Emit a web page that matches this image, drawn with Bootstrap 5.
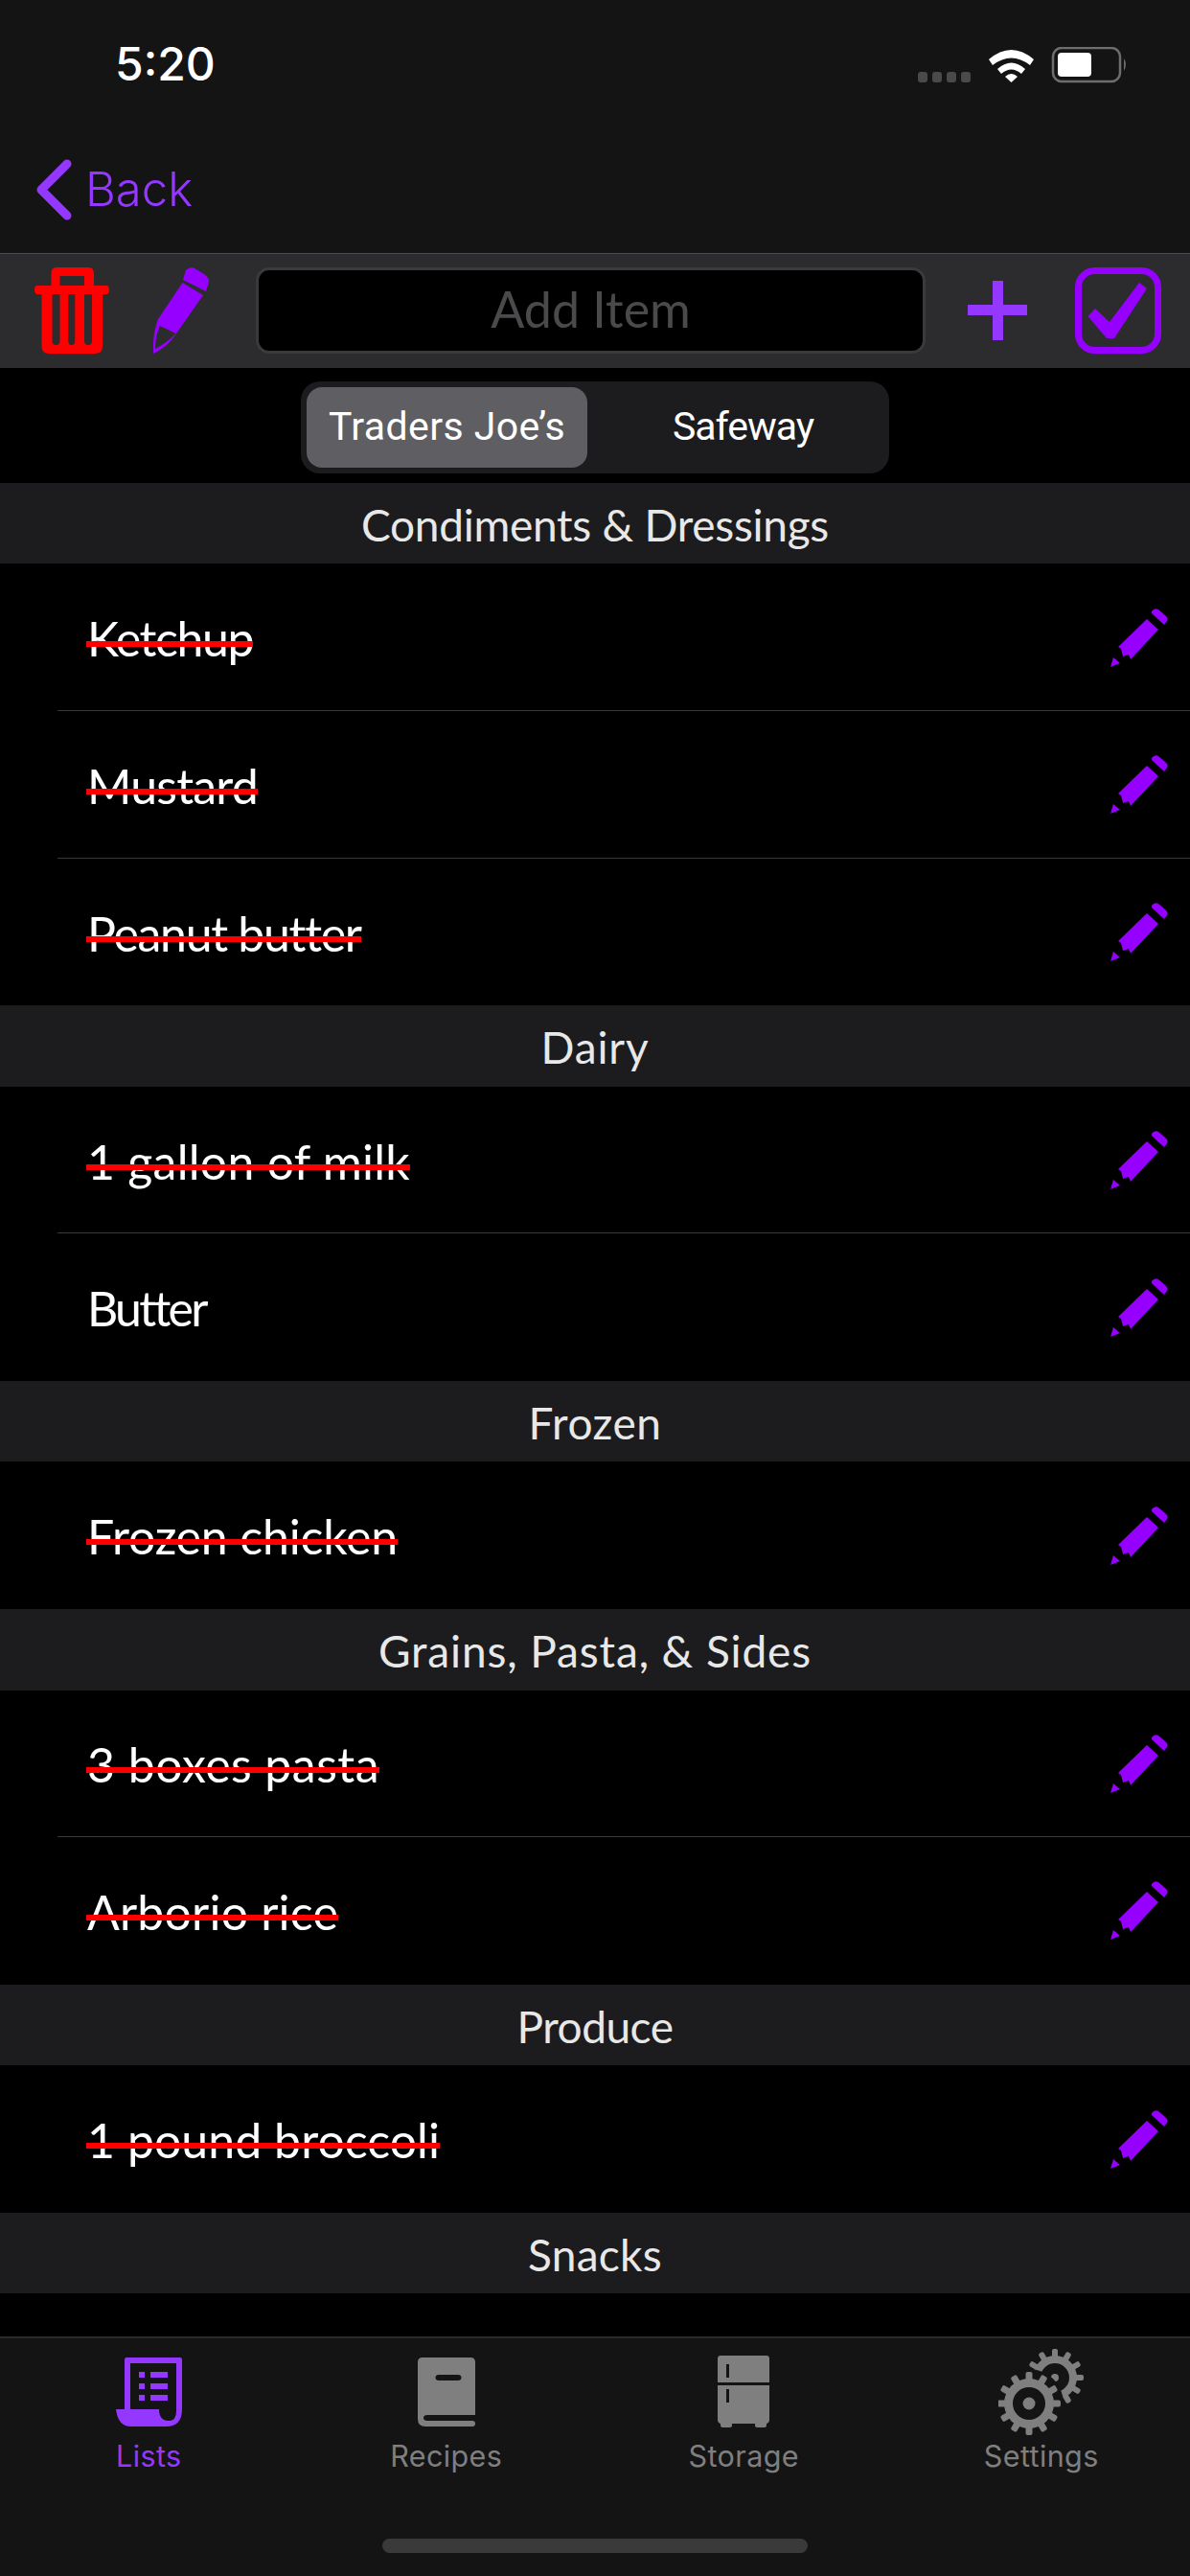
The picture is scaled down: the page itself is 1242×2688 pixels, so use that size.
<!DOCTYPE html>
<html lang="en">
<head>
    <meta charset="UTF-8">
    <meta name="viewport" content="width=device-width, initial-scale=1.0">
    <title>Lists</title>
    <link href="https://cdn.jsdelivr.net/npm/bootstrap@5.3.3/dist/css/bootstrap.min.css" rel="stylesheet">
    <style>
        html, body { height: 2688px; background: #000; }
        body { width: 1242px; overflow: hidden; font-family: "Lato", "Liberation Sans", sans-serif; color: #fff; }
        .top-area { background: #141414; height: 264px; }
        .status-row { height: 132px; padding: 0 65px 0 120px; }
        .status-icons { margin-top: 4px; }
        .clock { font-family: "Inter", "Liberation Sans", sans-serif; font-size: 48px; font-weight: 500; line-height: 1; margin-top: 2px; }
        .back-row { height: 132px; padding: 0 0 0 38px; color: #9437ff; font-family: "Inter", "Roboto", sans-serif; font-size: 49px; font-weight: 300; gap: 14px; }
        .tool-row { background: #2c2c2e; border-top: 1px solid #4c4c4e; height: 120px; padding: 14px 30px 15px 36px; }
        .pencil-big { margin-left: 46px; }
        .add-box { width: 699px; height: 90px; margin-left: 48px; background: #000; border: 3px solid #3a3a3c; border-radius: 14px; color: #4a4a4c; font-size: 52px; line-height: 80px; text-align: center; }
        .plus-btn { margin-left: 44px; margin-top: 14px; }
        .check-btn { margin-left: 50px; }
        .seg-row { height: 120px; background: #000; padding-top: 14px; }
        .seg-box { width: 614px; height: 96px; margin-left: 314px; background: #1c1c1e; border-radius: 20px; padding: 6px; }
        .seg-on, .seg-off { height: 84px; font-family: "Roboto", sans-serif; font-size: 41px; }
        .seg-on { width: 293px; background: #5f5f63; border-radius: 16px; }
        .seg-off { width: 309px; padding-left: 16px; }
        .sec-head { background: #1c1c1e; height: 84.4px; color: #e8e8e8; font-size: 46px; line-height: 87px; text-align: center; }
        .sec-head span { display: inline-block; white-space: nowrap; }
        .item-row { height: 153.67px; padding: 0 23px 0 60px; position: relative; font-size: 50px; background: #000; }
        .item-row + .item-row::before { content: ""; position: absolute; top: -1px; left: 60px; right: 0; height: 1px; background: #38383a; }
        .item-name { position: relative; display: inline-block; line-height: 1.2; margin-left: 31px; white-space: nowrap; top: 1px; }
        .item-name.crossed::after { content: ""; position: absolute; left: -1px; right: 0; top: 50%; height: 6px; margin-top: 3px; background: #f00; }
        .list-wrap { flex: 1 1 auto; overflow: hidden; background: #000; }
        .tab-bar { background: #141414; border-top: 2px solid #2a2a2a; height: 250px; padding-top: 10px; }
        .tab-col { width: 310.5px; text-align: center; color: #7f7f7f; font-family: "Inter", sans-serif; font-size: 30.5px; line-height: 1; }
        .tab-col.is-on { color: #9437ff; }
        .tab-icon { height: 92px; margin-bottom: 6px; }
        .tab-label { letter-spacing: .4px; }
        .home-bar { width: 444px; height: 15px; background: #3a3a3a; border-radius: 8px; position: absolute; left: 399px; bottom: 24px; }
    </style>
</head>
<body class="d-flex flex-column">
    <div class="top-area flex-shrink-0">
        <div class="status-row d-flex justify-content-between align-items-center">
            <div class="clock">5:20</div>
            <svg class="status-icons" width="219" height="38" viewBox="0 0 219 38">
                <g fill="#4a4a4a"><rect x="0" y="26" width="10" height="11" rx="3"/><rect x="15" y="26" width="10" height="11" rx="3"/><rect x="30" y="26" width="10" height="11" rx="3"/><rect x="45" y="26" width="10" height="11" rx="3"/></g>
                <g fill="#fff"><path d="M74 13 Q97.500 -7 121 13 L117 19 Q97.500 4 78 19Z"/><path d="M83 23 Q97.500 10 112 23 L108 28 Q97.500 19 87 28Z"/><path d="M91 31 Q97.500 25 104 31 L97.500 37Z"/></g>
                <rect x="141" y="1" width="70" height="35" rx="9" fill="none" stroke="#6e6e6e" stroke-width="2.500"/>
                <rect x="146" y="6" width="35" height="25" rx="4" fill="#fff"/>
                <path d="M215 12 Q219 18 215 25Z" fill="#6e6e6e"/>
            </svg>
        </div>
        <div class="back-row d-flex align-items-center">
            <svg width="37" height="64" viewBox="0 0 37 64"><path d="M32 5 L5 32 L32 59" fill="none" stroke="#9437ff" stroke-width="9" stroke-linecap="round" stroke-linejoin="round"/></svg>
            <span>Back</span>
        </div>
    </div>
    <div class="tool-row d-flex align-items-start flex-shrink-0">
        <svg width="78" height="90" viewBox="0 0 78 90">
            <path fill="#f00" fill-rule="evenodd" d="M23 0 H56 Q62 0 62 6 V19 H75 Q78 19 78 23.500 Q78 28 75 28 H71 V82 Q71 90 63 90 H15 Q7.500 90 7.500 82 V28 H3 Q0 28 0 23.500 Q0 19 3 19 H17.500 V6 Q17.500 0 23 0Z M26.500 9 V19 H52 V9Z M18.500 28 V77 Q18.500 81 22.500 81 Q26.500 81 26.500 77 V28Z M35.300 28 V77 Q35.300 81 38.800 81 Q42.300 81 42.300 77 V28Z M52 28 V77 Q52 81 56 81 Q60 81 60 77 V28Z"/>
        </svg>
        <svg class="pencil-big" width="59" height="90" viewBox="0 0 59 90">
            <path fill="#9600ff" d="M34 3 Q38 -1 43 1 L53 7 Q58 10 58 15 L55 25 L31 13Z"/>
            <path fill="#9600ff" fill-rule="evenodd" d="M30.500 16 L52 29 L24 69 Q15 83 0 90 Q-1 70 5 54Z M7 61 Q2 72 2 85 Q14 79 23.500 69Z"/>
        </svg>
        <div class="add-box">Add Item</div>
        <svg class="plus-btn" width="62" height="62" viewBox="0 0 62 62"><path fill="#9437ff" d="M26 0 H37 V25 H62 V36 H37 V62 H26 V36 H0 V25 H26Z"/></svg>
        <svg class="check-btn" width="90" height="90" viewBox="0 0 90 90">
            <rect x="3.500" y="3.500" width="83" height="83" rx="17" fill="none" stroke="#9600ff" stroke-width="7"/>
            <path fill="#9600ff" d="M13.500 51 L21 43 L36 57 L67 16 L75 22 L41 74 L33 74Z"/>
        </svg>
    </div>
    <div class="list-wrap d-flex flex-column">
        <div class="seg-row flex-shrink-0">
            <div class="seg-box d-flex">
                <div class="seg-on d-flex align-items-center justify-content-center"><span data-w="247">Traders Joe’s</span></div>
                <div class="seg-off d-flex align-items-center justify-content-center"><span data-w="147">Safeway</span></div>
            </div>
        </div>
        <div id="groups"></div>
    </div>
    <div class="tab-bar d-flex flex-shrink-0">
        <div class="tab-col is-on">
            <div class="tab-icon d-flex justify-content-center align-items-center">
                <svg width="69" height="72" viewBox="0 0 69 72"><path fill="#9437ff" fill-rule="evenodd" d="M9 2 Q9 0 11 0 H67 Q69 0 69 2 V54 Q69 72 52 72 H16 Q2 72 0 54 H9Z M15 6 V54 H45 Q45 66 55 66 Q63 66 63 56 V6Z"/><path fill="#9437ff" d="M24 15 H30 V21 H24Z M36 15 H54 V21 H36Z M24 27 H30 V33 H24Z M36 27 H54 V33 H36Z M24 39 H30 V45 H24Z M36 39 H54 V45 H36Z"/></svg>
            </div>
            <div class="tab-label">Lists</div>
        </div>
        <div class="tab-col">
            <div class="tab-icon d-flex justify-content-center align-items-center">
                <svg width="60" height="72" viewBox="0 0 60 72"><path fill="#7f7f7f" fill-rule="evenodd" d="M5 0 H55 Q60 0 60 5 V60 H10 Q6 60 6 63 Q6 66 10 66 H57 Q60 66 60 69 Q60 72 57 72 H8 Q0 72 0 64 V5 Q0 0 5 0Z M22 18 Q18.500 18 18.500 21 Q18.500 24 22 24 H42 Q45.500 24 45.500 21 Q45.500 18 42 18Z"/></svg>
            </div>
            <div class="tab-label">Recipes</div>
        </div>
        <div class="tab-col">
            <div class="tab-icon d-flex justify-content-center align-items-center">
                <svg width="54" height="76" viewBox="0 0 54 76"><path fill="#7f7f7f" fill-rule="evenodd" d="M3 0 H51 Q54 0 54 3 V28 H0 V3 Q0 0 3 0Z M9 9 V23 H12 V9Z"/><path fill="#7f7f7f" fill-rule="evenodd" d="M0 31 H54 V67 Q54 70 51 71 V73 Q51 75 49 75 H41 Q39 75 39 73 V71 H15 V73 Q15 75 13 75 H5 Q3 75 3 73 V71 Q0 70 0 67Z M9 35 V49 H12 V35Z"/></svg>
            </div>
            <div class="tab-label">Storage</div>
        </div>
        <div class="tab-col">
            <div class="tab-icon d-flex justify-content-center align-items-center">
                <svg width="90" height="90" viewBox="0 0 90 90" id="gears"></svg>
            </div>
            <div class="tab-label">Settings</div>
        </div>
    </div>
    <div class="home-bar"></div>
    <script src="https://cdn.jsdelivr.net/npm/bootstrap@5.3.3/dist/js/bootstrap.bundle.min.js"></script>
    <script>
        const editIcon = `<svg width="60" height="61" viewBox="0 0 60 61">
            <path fill="#9600ff" d="M43 3 Q46 -1 50 1 L57 7 Q61 10 59 13 L56 17 L43 5Z"/>
            <path fill="#9600ff" d="M38 11 L50 22 L21 53 L19 48 L13 50 L11 42 L8 40Z"/>
            <path fill="#9600ff" d="M3 51 L10 57 L0 61Z"/></svg>`;
        // name, crossed out, width in the screenshot
        const groups = [
            ['Condiments & Dressings', 488, [['Ketchup', 1, 173], ['Mustard', 1, 178], ['Peanut butter', 1, 284]]],
            ['Dairy', 113, [['1 gallon of milk', 1, 337], ['Butter', 0, 122]]],
            ['Frozen', 139, [['Frozen chicken', 1, 324]]],
            ['Grains, Pasta, & Sides', 452, [['3 boxes pasta', 1, 305], ['Arborio rice', 1, 262]]],
            ['Produce', 163, [['1 pound broccoli', 1, 368]]],
            ['Snacks', 140, []]
        ];
        let html = '';
        groups.forEach(g => {
            html += `<div class="sec-head"><span data-w="${g[1]}">${g[0].replace('&', '&amp;')}</span></div>`;
            g[2].forEach(it => {
                html += `<div class="item-row d-flex align-items-center justify-content-between">
                    <span class="item-name${it[1] ? ' crossed' : ''}" data-w="${it[2]}">${it[0]}</span>${editIcon}</div>`;
            });
        });
        document.getElementById('groups').innerHTML = html;

        // the substitute font runs wider or narrower per word, track it to the real width
        document.querySelectorAll('[data-w]').forEach(el => {
            const diff = el.dataset.w - el.getBoundingClientRect().width;
            el.style.letterSpacing = (diff / el.textContent.length) + 'px';
        });

        function gear(cx, cy, r, teeth, tw) {
            let out = `<circle cx="${cx}" cy="${cy}" r="${r}" fill="#7f7f7f"/>`;
            for (let i = 0; i < teeth; i++) {
                const a = i * 360 / teeth;
                out += `<rect x="${cx - tw / 2}" y="${cy - r - 7}" width="${tw}" height="10" rx="2" fill="#7f7f7f" transform="rotate(${a} ${cx} ${cy})"/>`;
            }
            return out;
        }
        document.getElementById('gears').innerHTML =
            gear(59, 30, 23, 12, 6) +
            `<circle cx="59" cy="30" r="15" fill="#141414"/><circle cx="59" cy="30" r="4" fill="#7f7f7f"/>` +
            `<circle cx="32" cy="57" r="36" fill="#141414"/>` +
            gear(32, 57, 26, 12, 7) +
            `<circle cx="32" cy="57" r="17" fill="#141414"/><circle cx="32" cy="57" r="6.500" fill="#7f7f7f"/>`;
    </script>
</body>
</html>
